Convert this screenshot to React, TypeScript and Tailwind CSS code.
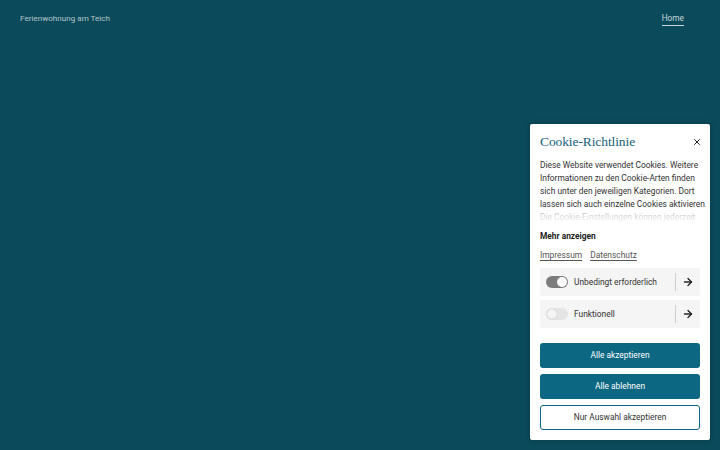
import { ArrowRight, X } from "lucide-react";

function Toggle({ on }: { on: boolean }) {
  return (
    <span
      className={
        on
          ? "relative flex h-[12px] w-[22px] items-center rounded-full bg-[#7d7d7d]"
          : "relative flex h-[12px] w-[22px] items-center rounded-full bg-[#e4e4e4]"
      }
    >
      <span
        className={
          on
            ? "absolute right-[1px] h-[10px] w-[10px] rounded-full bg-white"
            : "absolute left-[1px] h-[10px] w-[10px] rounded-full bg-[#f4f4f4] shadow-[0_0_1px_rgba(0,0,0,0.3)]"
        }
      />
    </span>
  );
}

function CategoryRow({ label, on }: { label: string; on: boolean }) {
  return (
    <div className="flex h-[28px] items-center rounded-[2px] bg-[#f5f5f5] pl-[6px]">
      <Toggle on={on} />
      <span className="ml-[6px] flex-1 text-[8.4px] text-[#333]">{label}</span>
      <span className="h-[18px] w-px bg-[#cfcfcf]" />
      <span className="flex w-[24px] justify-center">
        <ArrowRight size={12} strokeWidth={2.6} className="text-[#222]" />
      </span>
    </div>
  );
}

// line breaks as the banner shows them
const INTRO = [
  "Diese Website verwendet Cookies. Weitere",
  "Informationen zu den Cookie-Arten finden",
  "sich unter den jeweiligen Kategorien. Dort",
  "lassen sich auch einzelne Cookies aktivieren.",
  "Die Cookie-Einstellungen können jederzeit",
  "geändert werden.",
];

export default function App() {
  return (
    <div
      className="relative h-[450px] w-[720px] overflow-hidden bg-[#0b4a5a]"
      style={{ fontFamily: "Roboto, 'Liberation Sans', sans-serif" }}
    >
      <header className="flex items-start justify-between pl-[20px] pr-[36px] pt-[12px]">
        <span className="text-[8.1px] leading-[12px] text-[#b5c7cc]">Ferienwohnung am Teich</span>
        <a className="border-b border-[#c7d6da] pb-[1px] text-[8.3px] leading-[12px] text-[#c7d6da]">Home</a>
      </header>

      <aside className="absolute right-[10px] top-[124px] flex h-[316px] w-[180px] flex-col rounded-[2px] bg-white px-[10px] pt-[10px] shadow-[0_0_6px_rgba(0,0,0,0.2)]">
        <div className="flex items-center justify-between">
          <h2
            className="text-[13.5px] leading-[16px] text-[#15627a]"
            style={{ fontFamily: "'Liberation Serif', serif", letterSpacing: "-0.1px" }}
          >
            Cookie-Richtlinie
          </h2>
          <X size={10} strokeWidth={2.4} className="mr-[-2px] text-[#222]" />
        </div>

        <div className="relative mr-[-6px] mt-[9px] h-[63px] overflow-hidden text-[8.4px] leading-[12.9px] text-[#333]">
          <p className="whitespace-nowrap">
            {INTRO.map((line) => (
              <span key={line} className="block">
                {line}
              </span>
            ))}
          </p>
          <div className="absolute inset-x-0 bottom-0 h-[13px] bg-gradient-to-b from-white/60 to-white/95" />
        </div>

        <div className="mt-[8px] text-[8.4px] font-bold leading-[13px] text-[#222]">Mehr anzeigen</div>

        <div className="mt-[6px] flex gap-[8px] text-[8.4px] leading-[13px] text-[#555]">
          <a className="underline underline-offset-2">Impressum</a>
          <a className="underline underline-offset-2">Datenschutz</a>
        </div>

        <div className="mt-[6px] flex flex-col gap-[4px]">
          <CategoryRow label="Unbedingt erforderlich" on />
          <CategoryRow label="Funktionell" on={false} />
        </div>

        <div className="mt-[15px] flex flex-col gap-[6px]">
          <button className="h-[25px] rounded-[3px] bg-[#0b6782] text-[8.4px] text-white">Alle akzeptieren</button>
          <button className="h-[25px] rounded-[3px] bg-[#0b6782] text-[8.4px] text-white">Alle ablehnen</button>
          <button className="h-[25px] rounded-[3px] border border-[#0b6782] bg-white text-[8.4px] text-[#333]">
            Nur Auswahl akzeptieren
          </button>
        </div>
      </aside>
    </div>
  );
}
